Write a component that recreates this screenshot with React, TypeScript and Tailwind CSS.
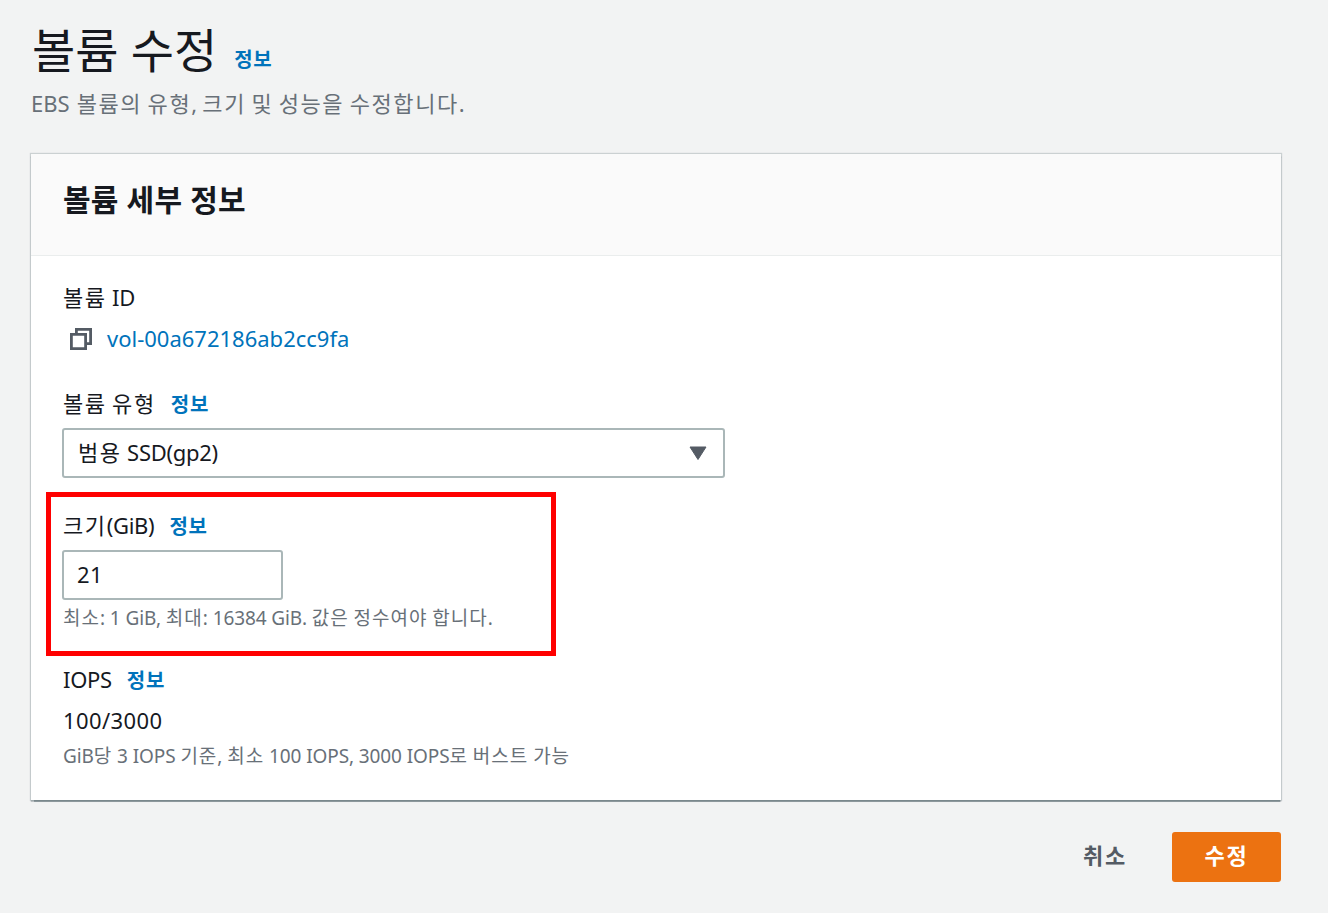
import { useState } from "react";
import type { ReactNode } from "react";
import clsx from "clsx";

// Hangul runs are set a little looser than the latin text around them.
function Mixed({ text, small }: { text: string; small?: boolean }) {
  const runs = text.split(/([가-힣]+)/).filter(Boolean);
  return (
    <span className="whitespace-pre">
      {runs.map((run, i) => (
        <span
          key={i}
          className={
            /[가-힣]/.test(run)
              ? small
                ? "tracking-[1px]"
                : "tracking-[1.6px]"
              : small
                ? "tracking-[-0.1px]"
                : "tracking-[-0.3px]"
          }
        >
          {run}
        </span>
      ))}
    </span>
  );
}

function InfoLink({ className }: { className?: string }) {
  return (
    <a
      href="#"
      className={clsx("text-[20px] font-bold tracking-[0.7px] text-[#0073bb]", className)}
    >
      정보
    </a>
  );
}

function Label({ children, info }: { children: ReactNode; info?: boolean }) {
  return (
    <div className="flex h-8 items-center gap-[15px] whitespace-nowrap text-[22px] text-[#16191f]">
      <span className="-mt-0.5">{children}</span>
      {info && <InfoLink className="mt-0.5" />}
    </div>
  );
}

function Hint({ text }: { text: string }) {
  return (
    <p className="mt-1 flex h-7 items-center text-[19px] text-[#687078]">
      <Mixed text={text} small />
    </p>
  );
}

function CopyIcon() {
  return (
    <svg width="24" height="24" viewBox="0 0 24 24" fill="none" stroke="#545b64" strokeWidth="2.8">
      <path d="M2.4 7.4h14.2v14.2H2.4z" />
      <path d="M7.4 7.4V2.4h14.2v14.2h-5" />
    </svg>
  );
}

export default function App() {
  const [size, setSize] = useState("21");

  return (
    <main className="h-[913px] w-[1328px] overflow-hidden bg-[#f2f3f3] pl-[31px] pr-[47px] pt-[26px] font-['Noto_Sans','Noto_Sans_CJK_KR',sans-serif] text-[#16191f]">
      <header className="h-[128px]">
        <div className="flex h-12 items-center gap-[17px] whitespace-nowrap">
          <h1 className="pl-px text-[47px] leading-[46px]">볼륨 수정</h1>
          <InfoLink className="mt-5" />
        </div>
        <p className="mt-[13px] flex h-8 items-center text-[22px] text-[#687078]">
          <span className="mr-[7px]">EBS</span>
          <Mixed text="볼륨의 유형, 크기 및 성능을 수정합니다." />
        </p>
      </header>

      <section className="h-[646px] bg-white shadow-[0_1.5px_1px_0_rgba(0,28,36,0.4),0_0_1px_1px_rgba(0,28,36,0.16)]">
        <div className="h-[102px] border-b border-[#eaeded] bg-[#fafafa] px-8 pt-[26px]">
          <h2 className="text-[30px] font-bold leading-10 tracking-[0.2px]">볼륨 세부 정보</h2>
        </div>

        <div className="px-8 pt-[26px]">
          <Label>
            <Mixed text="볼륨 ID" />
          </Label>
          <div className="mt-[9px] flex h-8 items-center gap-3.5 pl-1.5">
            <CopyIcon />
            <a href="#" className="-mt-0.5 text-[22px] text-[#0073bb]">
              vol-00a672186ab2cc9fa
            </a>
          </div>

          <div className="mt-[33px]">
            <Label info>
              <Mixed text="볼륨 유형" />
            </Label>
            <button className="-ml-px mt-2 flex h-[50px] w-[663px] items-center justify-between rounded-[3px] border-2 border-[#aab7b8] bg-white pl-3.5 pr-4 text-[22px]">
              <span className="-mt-0.5">
                <Mixed text="범용 SSD(gp2)" />
              </span>
              <svg width="18" height="14" viewBox="0 0 18 14" fill="#545b64">
                <path d="M1 1h16L9 13.5z" stroke="#545b64" strokeLinejoin="round" />
              </svg>
            </button>
          </div>

          <div className="-ml-[17px] mt-3.5 h-[164px] w-[510px] border-[5px] border-[#ff0000] pl-3 pt-[13px]">
            <Label info>
              <Mixed text="크기(GiB)" />
            </Label>
            <input
              value={size}
              onChange={(e) => setSize(e.target.value)}
              className="-ml-px mt-2 block h-[50px] w-[221px] rounded-[3px] border-2 border-[#aab7b8] bg-white px-[13px] pb-0.5 text-[22px] tracking-[0.3px] outline-none"
            />
            <Hint text="최소: 1 GiB, 최대: 16384 GiB. 값은 정수여야 합니다." />
          </div>

          <div className="mt-2">
            <Label info>
              <Mixed text="IOPS" />
            </Label>
            <div className="mt-2 flex h-8 items-center text-[22px] tracking-[0.4px]">100/3000</div>
            <div className="pt-0.5">
              <Hint text="GiB당 3 IOPS 기준, 최소 100 IOPS, 3000 IOPS로 버스트 가능" />
            </div>
          </div>
        </div>
      </section>

      <footer className="mt-8 flex items-center justify-end gap-[45px] text-[22px] font-bold tracking-[1.7px]">
        <button className="pb-1 text-[#545b64]">취소</button>
        <button className="h-[50px] w-[109px] rounded-[3px] bg-[#ec7211] pb-1 text-white">수정</button>
      </footer>
    </main>
  );
}
